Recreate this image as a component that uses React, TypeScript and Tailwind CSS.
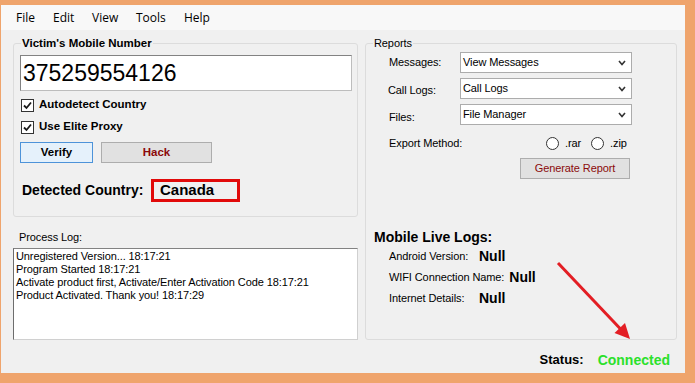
import React from 'react';

const sans = "font-['Liberation_Sans',Arial,sans-serif]";

function Check() {
  return (
    <span className="flex h-[13px] w-[13px] items-center justify-center border border-[#333333] bg-white">
      <svg width="11" height="11" viewBox="0 0 11 11">
        <path d="M2 5.5 L4.5 8 L9 2.5" fill="none" stroke="#1a1a1a" strokeWidth="1.8" />
      </svg>
    </span>
  );
}

function Radio() {
  return <span className="block h-[13px] w-[13px] rounded-full border border-[#333333] bg-white" />;
}

function Select({ value }: { value: string }) {
  return (
    <div className="flex h-[21px] w-[172px] items-center justify-between border border-[#acacac] bg-white pl-[2px] pr-[5px]">
      <span>{value}</span>
      <svg width="8" height="6" viewBox="0 0 8 6">
        <path d="M1 1 L4 4.5 L7 1" fill="none" stroke="#333" strokeWidth="1.6" />
      </svg>
    </div>
  );
}

export default function App() {
  return (
    <div
      className={`relative flex h-[383px] w-[695px] flex-col border-t-[5px] border-r-[10px] border-b-[10px] border-l-[1px] border-[#efa46c] bg-[#f0f0f0] text-black ${sans}`}
    >
      {/* menu */}
      <div className="flex h-[25px] items-center bg-[#f8f8f8] pl-[15px] font-['Open_Sans',sans-serif] text-[12px]">
        <span className="w-[37px]">File</span>
        <span className="w-[39px]">Edit</span>
        <span className="w-[44px]">View</span>
        <span className="w-[48px]">Tools</span>
        <span>Help</span>
      </div>

      <div className="flex h-[310px] text-[11px] tracking-[-0.1px]">
        {/* left column */}
        <div className="ml-[12px] flex w-[345px] flex-col">
          <div className="relative mt-[13px] h-[174px] rounded-[3px] border border-[#dcdcdc]">
            <span className="absolute -top-[8px] left-[7px] bg-[#f0f0f0] px-[1px] text-[11.5px] leading-[14px] font-bold tracking-normal">
              Victim's Mobile Number
            </span>
            <div className="mt-[11px] ml-[6px] flex h-[36px] w-[332px] items-center border border-[#bdbdbd] border-t-[#828282] border-l-[#828282] bg-white pl-[2px] text-[23px] tracking-normal">
              375259554126
            </div>
            <div className="mt-[7px] ml-[7px] flex h-[14px] items-center gap-[5px] text-[11.5px] font-bold tracking-normal">
              <Check />
              <span>Autodetect Country</span>
            </div>
            <div className="mt-[8px] ml-[7px] flex h-[14px] items-center gap-[5px] text-[11.5px] font-bold tracking-normal">
              <Check />
              <span>Use Elite Proxy</span>
            </div>
            <div className="mt-[8px] ml-[6px] flex gap-[8px] text-[11.5px] font-bold tracking-normal">
              <button className="flex h-[21px] w-[73px] items-center justify-center border border-[#4d93d9] bg-[#e5f1fb]">
                Verify
              </button>
              <button className="flex h-[21px] w-[111px] items-center justify-center border border-[#adadad] bg-[#e1e1e1] text-[#8b0a0a]">
                Hack
              </button>
            </div>
            <div className="mt-[16px] ml-[8px] flex items-center font-bold tracking-normal">
              <span className="w-[129px] text-[14px]">Detected Country:</span>
              <div className="flex h-[23px] w-[89px] items-center border-[3px] border-[#e10a0a] pl-[6px] text-[15px]">
                Canada
              </div>
            </div>
          </div>
          <div className="mt-[14px] h-[13px] pl-[6px] leading-[13px]">Process Log:</div>
          <div className="mt-[4px] h-[92px] border border-[#d0d0d0] border-t-[#828282] border-l-[#6d6d6d] bg-white pt-[1px] pl-[2px] leading-[13px]">
            <div>Unregistered Version... 18:17:21</div>
            <div>Program Started 18:17:21</div>
            <div>Activate product first, Activate/Enter Activation Code 18:17:21</div>
            <div>Product Activated. Thank you! 18:17:29</div>
          </div>
        </div>

        {/* right column */}
        <div className="relative mt-[13px] ml-[7px] flex h-[297px] w-[312px] flex-col rounded-[3px] border border-[#dcdcdc]">
          <span className="absolute -top-[8px] left-[7px] bg-[#f0f0f0] px-[1px] leading-[14px]">Reports</span>
          <div className="mt-[8px] flex h-[21px] items-center">
            <span className="w-[94px] pl-[23px]">Messages:</span>
            <Select value="View Messages" />
          </div>
          <div className="mt-[5px] flex h-[21px] items-center">
            <span className="w-[94px] pl-[22px] pt-[3px]">Call Logs:</span>
            <Select value="Call Logs" />
          </div>
          <div className="mt-[5px] flex h-[21px] items-center">
            <span className="w-[94px] pl-[23px] pt-[5px]">Files:</span>
            <Select value="File Manager" />
          </div>
          <div className="mt-[10px] flex h-[16px] items-center">
            <span className="w-[180px] pl-[23px]">Export Method:</span>
            <Radio />
            <span className="ml-[6px]">.rar</span>
            <span className="ml-[10px]">
              <Radio />
            </span>
            <span className="ml-[6px]">.zip</span>
          </div>
          <button className="mt-[7px] ml-[154px] flex h-[21px] w-[110px] items-center justify-center border border-[#adadad] bg-[#e1e1e1] text-[#8b0a0a]">
            Generate Report
          </button>
          <div className="mt-[50px] h-[16px] pl-[8px] text-[14px] leading-[16px] font-bold tracking-normal">
            Mobile Live Logs:
          </div>
          {[
            ['Android Version:', 'Null'],
            ['WIFI Connection Name:', 'Null'],
            ['Internet Details:', 'Null'],
          ].map(([k, v]) => (
            <div key={k} className="mt-[1px] flex h-[20px] items-center pl-[23px]">
              <span className="min-w-[90px] pr-[5px]">{k}</span>
              <span className="text-[14px] font-bold tracking-normal">{v}</span>
            </div>
          ))}
        </div>
      </div>

      {/* status */}
      <div className="flex h-[33px] items-center justify-end gap-[14px] pt-[7px] pr-[15px] font-bold">
        <span className="text-[13px]">Status:</span>
        <span className="text-[14px] text-[#2be02b]">Connected</span>
      </div>

      {/* annotation arrow */}
      <svg
        className="pointer-events-none absolute top-0 left-0"
        width="684"
        height="368"
        viewBox="1 5 684 368"
      >
        <line x1="558" y1="263" x2="621" y2="329.5" stroke="#e31e24" strokeWidth="3" />
        <polygon points="630,339 614.5,333 625,323" fill="#e31e24" />
      </svg>
    </div>
  );
}
